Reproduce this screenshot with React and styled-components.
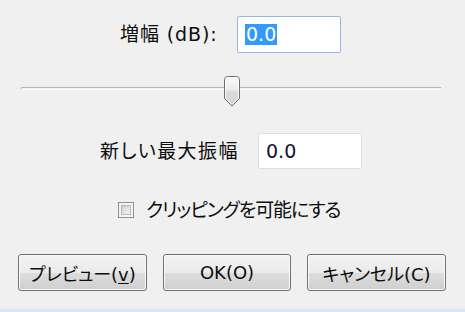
import React from "react";
import styled, { createGlobalStyle } from "styled-components";

const GlobalStyle = createGlobalStyle`
  html, body {
    margin: 0;
    padding: 0;
    background: #f0f0f0;
  }
  body {
    font-family: "DejaVu Sans", "Noto Sans CJK JP", sans-serif;
    color: #111111;
  }
`;

const UI_FONT = `"DejaVu Sans", "Noto Sans CJK JP", sans-serif`;

export default function App() {
  return (
    <>
      <GlobalStyle />
      <S.Dialog>
        <S.FieldRow $indent={120} $labelWidth={117}>
          <S.Label $spacing={0.9}>増幅 (dB):</S.Label>
          <S.TextBox $focused>
            <S.Selected>0.0</S.Selected>
          </S.TextBox>
        </S.FieldRow>

        <S.Slider>
          <S.Track />
          <S.Thumb style={{ left: 202 }}>
            <svg width="18" height="31" viewBox="0 0 18 31">
              <defs>
                <linearGradient id="thumbFill" x1="0" y1="0" x2="0" y2="1">
                  <stop offset="0" stopColor="#fbfbfb" />
                  <stop offset="0.45" stopColor="#ececec" />
                  <stop offset="0.5" stopColor="#dcdcdc" />
                  <stop offset="1" stopColor="#d2d2d2" />
                </linearGradient>
              </defs>
              <path
                d="M1.5 4 Q1.5 0.5 5 0.5 H13 Q16.5 0.5 16.5 4 V22.5 L9 30 L1.5 22.5 Z"
                fill="url(#thumbFill)"
                stroke="#6e6e6e"
              />
              <path
                d="M2.5 4 Q2.5 1.5 5 1.5 H13 Q15.5 1.5 15.5 4 V22 L9 28.6 L2.5 22 Z"
                fill="none"
                stroke="#ffffff"
                strokeOpacity="0.8"
              />
            </svg>
          </S.Thumb>
        </S.Slider>

        <S.FieldRow $indent={100} $labelWidth={158} $top={26}>
          <S.Label $spacing={1.4}>新しい最大振幅</S.Label>
          <S.TextBox>0.0</S.TextBox>
        </S.FieldRow>

        <S.CheckRow>
          <S.CheckBox />
          <S.Label $spacing={-1.1}>クリッピングを可能にする</S.Label>
        </S.CheckRow>

        <S.ButtonBar>
          <S.Button $width={129}>
            プレビュー(<S.Key>v</S.Key>)
          </S.Button>
          <S.Button $width={128}>OK(O)</S.Button>
          <S.Button $width={139}>キャンセル(C)</S.Button>
        </S.ButtonBar>
      </S.Dialog>
    </>
  );
}

const S = {
  Dialog: styled.div`
    width: 465px;
    height: 312px;
    box-sizing: border-box;
    padding-top: 16px;
    display: flex;
    flex-direction: column;
    border-bottom: 3px solid #d9e7f6;
    overflow: hidden;
  `,
  FieldRow: styled.div`
    display: grid;
    grid-template-columns: ${(p) => p.$labelWidth}px 104px;
    align-items: center;
    padding-left: ${(p) => p.$indent}px;
    margin-top: ${(p) => p.$top || 0}px;
  `,
  Label: styled.span`
    font-family: ${UI_FONT};
    font-size: 19px;
    font-weight: 400;
    font-feature-settings: "palt";
    letter-spacing: ${(p) => p.$spacing || 0}px;
    white-space: nowrap;
    line-height: 1;
    color: #0d0d0d;
  `,
  TextBox: styled.div`
    box-sizing: border-box;
    width: 104px;
    height: ${(p) => (p.$focused ? 37 : 36)}px;
    padding-left: 7px;
    display: flex;
    align-items: center;
    background: #ffffff;
    border: 1px solid ${(p) => (p.$focused ? "#8fb9e6" : "#dedede")};
    border-radius: 2px;
    font-family: ${UI_FONT};
    font-size: 19px;
    color: #10103a;
  `,
  Selected: styled.span`
    background: #3399ff;
    color: #ffffff;
    line-height: 21px;
    padding: 0 1px;
  `,
  Slider: styled.div`
    position: relative;
    width: 420px;
    height: 31px;
    margin: 23px 0 0 21px;
  `,
  Track: styled.div`
    position: absolute;
    left: 0;
    right: 0;
    top: 11px;
    height: 1px;
    border-top: 1px solid #b4b4b4;
    border-bottom: 1px solid #ffffff;
    border-left: 1px solid #c4c4c4;
  `,
  Thumb: styled.div`
    position: absolute;
    top: 0;
    width: 18px;
    height: 31px;
    svg {
      display: block;
    }
  `,
  CheckRow: styled.div`
    display: flex;
    align-items: center;
    gap: 12px;
    height: 24px;
    margin-top: 29px;
    padding-left: 118px;
  `,
  CheckBox: styled.span`
    box-sizing: border-box;
    width: 16px;
    height: 16px;
    border: 1px solid #8e8f8f;
    background: #f4f4f4;
    box-shadow: inset 0 0 0 2px #f4f4f4, inset 0 0 0 3px #b8b8b8;
    position: relative;
    &::after {
      content: "";
      position: absolute;
      inset: 3px;
      background: linear-gradient(135deg, #cdcdcd, #f6f6f6);
    }
  `,
  ButtonBar: styled.div`
    display: flex;
    gap: 16px;
    margin-top: 32px;
    padding-left: 18px;
  `,
  Button: styled.button`
    box-sizing: border-box;
    width: ${(p) => p.$width}px;
    height: 37px;
    padding: 0;
    border: 1px solid #707070;
    border-radius: 3px;
    background: linear-gradient(
      to bottom,
      #f2f2f2 0%,
      #ebebeb 50%,
      #dddddd 51%,
      #cfcfcf 100%
    );
    box-shadow: inset 0 0 0 1px #fbfbfb;
    font-family: ${UI_FONT};
    font-size: 18px;
    font-weight: 400;
    font-feature-settings: "palt";
    color: #0d0d0d;
    white-space: nowrap;
  `,
  Key: styled.span`
    text-decoration: underline;
    text-underline-offset: 2px;
  `,
};
